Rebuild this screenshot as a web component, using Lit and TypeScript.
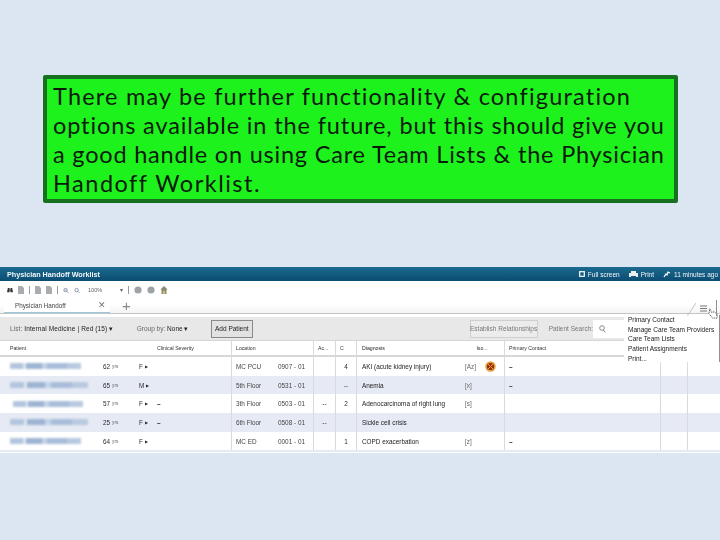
import { LitElement, html, css, svg } from "lit";
import { customElement } from "lit/decorators.js";

type Row = { w: number; off: number; age: string; sex: string; sev: string; loc: string; bed: string; ac: string; c: string; dx: string; iso: string; flag?: boolean; pc: string };

const rows: Row[] = [
  { w: 71, off: 10, age: "62", sex: "F", sev: "", loc: "MC PCU", bed: "0907 - 01", ac: "", c: "4", dx: "AKI (acute kidney injury)", iso: "[Az]", flag: true, pc: "–" },
  { w: 78, off: 10, age: "65", sex: "M", sev: "", loc: "5th Floor", bed: "0531 - 01", ac: "", c: "--", dx: "Anemia", iso: "[x]", pc: "–" },
  { w: 70, off: 13, age: "57", sex: "F", sev: "–", loc: "3th Floor", bed: "0503 - 01", ac: "--", c: "2", dx: "Adenocarcinoma of right lung", iso: "[s]", pc: "" },
  { w: 78, off: 10, age: "25", sex: "F", sev: "–", loc: "6th Floor", bed: "0508 - 01", ac: "--", c: "", dx: "Sickle cell crisis", iso: "", pc: "" },
  { w: 71, off: 10, age: "64", sex: "F", sev: "", loc: "MC ED", bed: "0001 - 01", ac: "", c: "1", dx: "COPD exacerbation", iso: "[z]", pc: "–" },
];

const menu = ["Primary Contact", "Manage Care Team Providers", "Care Team Lists", "Patient Assignments", "Print..."];

const doc = svg`<path d="M0 0h4l2 2v6H0z" fill="#a9adb0"/>`;

@customElement("app-root")
export class AppRoot extends LitElement {
  static styles = css`
    :host { display: block; width: 720px; height: 540px; background: #dce6f2; overflow: hidden; font-family: "Liberation Sans", Arial, sans-serif; }
    .page { display: flex; flex-direction: column; padding-top: 75px; }
    .callout {
      box-sizing: border-box; width: 635px; height: 128px; margin-left: 43px;
      border: 4px solid #17701f; border-radius: 2px; background: #1df21d; color: #0a1a0a;
      padding: 3px 0 0 6px; font: 400 23.5px/29px "Lato", "Liberation Sans", sans-serif; white-space: nowrap;
    }
    .callout div { height: 29px; }
    .l1 { letter-spacing: 1.2px; }
    .l2 { letter-spacing: 0.88px; }
    .l3 { letter-spacing: 0.8px; }
    .l4 { letter-spacing: 1.5px; }
    .app { position: relative; margin-top: 64px; height: 186px; background: #fff; filter: blur(0.35px); color: #222; font-size: 7px; }
    .top { height: 14px; background: linear-gradient(#1b6b90, #0b4c72); color: #f2f6f8; display: flex; align-items: center; padding: 0 2px 0 7px; font-size: 6.5px; }
    .title { font-weight: 700; font-size: 7.2px; flex: 1; }
    .tact { display: flex; align-items: center; gap: 3px; margin-left: 9px; white-space: nowrap; }
    .tools { box-sizing: border-box; height: 17px; display: flex; align-items: center; padding: 1px 0 0 7px; gap: 5px; color: #555; }
    .sep { width: 1px; height: 8px; background: #9a9a9a; }
    .zoomv { box-sizing: border-box; width: 38px; padding-left: 3px; color: #666; font-size: 5.6px; display: flex; justify-content: space-between; }
    .tabs { box-sizing: border-box; height: 16px; display: flex; align-items: center; border-bottom: 1px solid #c4c4c4; background: linear-gradient(#fff 40%, #f4f4f4); }
    .tab { box-sizing: border-box; width: 106px; height: 15px; margin-left: 4px; padding: 0 4px 0 11px; display: flex; align-items: center; justify-content: space-between; border-bottom: 1px solid #9cc6da; background: #fff; color: #444; font-size: 6.3px; }
    .tabx { color: #777; font-size: 9px; }
    .plus { margin-left: 12px; color: #888; font-size: 15px; line-height: 15px; }
    .filter { margin-top: 3px; height: 23px; background: #e8e8e8; display: flex; align-items: center; padding-left: 10px; color: #666; font-size: 6.5px; white-space: nowrap; }
    .filter b { font-weight: 400; color: #222; }
    .list { width: 128px; letter-spacing: 0.1px; }
    .group { width: 75px; }
    .btn { box-sizing: border-box; height: 18px; display: flex; align-items: center; justify-content: center; white-space: nowrap; }
    .add { width: 42px; border: 1px solid #8a8a8a; background: #e2e2e2; color: #222; }
    .est { width: 68px; margin-left: 217px; border: 1px solid #cfcfcf; background: #ececec; color: #777; }
    .search { margin-left: 11px; width: 45px; color: #777; }
    .input { width: 122px; height: 18px; background: #fff; display: flex; align-items: center; padding-left: 6px; }
    .grid { display: grid; grid-template-columns: 100px 35px 18px 78px 82px 22px 21px 104px 44px 156px 27px 29px; align-items: center; }
    .head { box-sizing: border-box; height: 17px; background: #fff; border-top: 1px solid #d6d6d6; border-bottom: 2px solid #d8d8d8; font-size: 5.2px; color: #333; }
    .row { height: 18.7px; font-size: 6.4px; color: #2a2a2a; background: #fff; }
    .row.alt { background: #e6eaf4; }
    .cell { height: 100%; display: flex; align-items: center; box-sizing: border-box; min-width: 0; white-space: nowrap; }
    .line { border-left: 1px solid #dadada; }
    .pad { padding-left: 3px; }
    .age small { font-size: 4.6px; color: #666; margin-left: 2px; }
    .sx { padding-left: 4px; }
    .dx { padding-left: 5px; color: #222; }
    .ctr { justify-content: center; }
    .name { height: 6px; border-radius: 1px; background: linear-gradient(90deg, #b3c5de 0 18%, #dfe6f0 18% 22%, #9db4d3 22% 45%, #c4d2e6 45% 52%, #a8bdd9 52% 80%, #b8c9e0 80%); filter: blur(1px); }
    .sev { padding-left: 4px; }
    .pc { font-weight: 700; color: #222; }
    .tri { margin-left: 2px; font-size: 4px; }
    .loc { display: flex; width: 100%; padding-left: 4px; gap: 9px; color: #444; }
    .locn { width: 33px; overflow: hidden; }
    .iso { gap: 9px; padding-left: 5px; color: #666; }
    .end { height: 2px; background: #e6eaf4; }
    .menu { position: absolute; left: 624px; top: 48px; width: 91px; height: 47px; background: #fff; border-right: 1px solid #8f8f8f; padding-left: 4px; box-sizing: content-box; color: #222; font-size: 6.5px; line-height: 9.7px; white-space: nowrap; }
    .burger { position: absolute; left: 687px; top: 33px; }
    .cursor { position: absolute; left: 708px; top: 41px; }
    .rsep { position: absolute; right: 3px; top: 33px; width: 1px; height: 16px; background: #8f8f8f; }
  `;

  render() {
    return html`<div class="page">
      <div class="callout"><div class="l1">There may be further functionality &amp; configuration</div><div class="l2">options available in the future, but this should give you</div><div class="l3">a good handle on using Care Team Lists &amp; the Physician</div><div class="l4">Handoff Worklist.</div></div>
      <div class="app">
        <div class="top">
          <span class="title">Physician Handoff Worklist</span>
          <span class="tact"><svg width="6" height="6" viewBox="0 0 6 6"><rect x=".7" y=".7" width="4.6" height="4.6" fill="none" stroke="#fff" stroke-width="1.2"/></svg>Full screen</span>
          <span class="tact"><svg width="9" height="7" viewBox="0 0 9 7"><path d="M2 0h5v2h2v4H7V5H2v1H0V2h2z" fill="#e8eef2"/></svg>Print</span>
          <span class="tact"><svg width="8" height="7" viewBox="0 0 8 7"><path d="M1 6l2-3 1 1 1-3 2 1" fill="none" stroke="#fff" stroke-width="1.2"/></svg>11 minutes ago</span>
        </div>
        <div class="tools">
          <svg width="6" height="7" viewBox="0 0 7 8"><path d="M1 1h2v2h1V1h2l1 5H4V4H3v2H0z" fill="#333"/></svg>
          <svg width="6" height="8" viewBox="0 0 6 8">${doc}</svg><span class="sep"></span>
          <svg width="6" height="8" viewBox="0 0 6 8">${doc}</svg>
          <svg width="6" height="8" viewBox="0 0 6 8">${doc}</svg><span class="sep"></span>
          <svg width="6" height="7" viewBox="0 0 8 8"><circle cx="3.4" cy="3.4" r="2.3" fill="none" stroke="#6d7f95"/><path d="M5 5l2.4 2.4M2.2 3.4h2.4" stroke="#6d7f95"/></svg>
          <svg width="6" height="7" viewBox="0 0 8 8"><circle cx="3.4" cy="3.4" r="2.3" fill="none" stroke="#6d7f95"/><path d="M5 5l2.4 2.4" stroke="#6d7f95"/></svg>
          <span class="zoomv"><span>100%</span><span>▾</span></span><span class="sep"></span>
          <svg width="8" height="8" viewBox="0 0 8 8"><circle cx="4" cy="4" r="3.6" fill="#9ea3a6"/></svg>
          <svg width="8" height="8" viewBox="0 0 8 8"><circle cx="4" cy="4" r="3.6" fill="#9ea3a6"/></svg>
          <svg width="8" height="8" viewBox="0 0 8 8"><path d="M4 0l3.600 3.600H6.500V8h-5V3.600H.4z" fill="#8b8b6f"/><path d="M3.200 5h1.600v3H3.200z" fill="#e8d27a"/></svg>
        </div>
        <div class="tabs">
          <div class="tab"><span>Physician Handoff</span><span class="tabx">✕</span></div>
          <span class="plus">+</span>
        </div>
        <div class="filter">
          <span class="list">List: <b>Internal Medicine | Red (15) ▾</b></span>
          <span class="group">Group by: <b>None ▾</b></span>
          <span class="btn add">Add Patient</span>
          <span class="btn est">Establish Relationships</span>
          <span class="search">Patient Search:</span>
          <span class="input"><svg width="7" height="8" viewBox="0 0 7 8"><circle cx="3" cy="3" r="2.300" fill="none" stroke="#888"/><path d="M4.500 5l1.800 2.400" stroke="#888"/></svg></span>
        </div>
        <div class="grid head">
          <span class="cell" style="grid-column: span 3; padding-left: 10px">Patient</span>
          <span class="cell sev">Clinical Severity</span>
          <span class="cell line sev">Location</span>
          <span class="cell line sev">Ac...</span>
          <span class="cell line sev">C</span>
          <span class="cell line dx">Diagnosis</span>
          <span class="cell ctr">Iso...</span>
          <span class="cell line sev">Primary Contact</span>
          <span class="cell"></span><span class="cell"></span>
        </div>
        ${rows.map((r, i) => html`<div class="grid row ${i % 2 ? "alt" : ""}">
          <span class="cell"><span class="name" style="width:${r.w}px;margin-left:${r.off}px"></span></span>
          <span class="cell pad age">${r.age}<small>yrs</small></span>
          <span class="cell sx">${r.sex}<span class="tri">▶</span></span>
          <span class="cell sev pc">${r.sev}</span>
          <span class="cell line"><span class="loc"><span class="locn">${r.loc}</span><span>${r.bed}</span></span></span>
          <span class="cell line ctr">${r.ac}</span>
          <span class="cell line ctr">${r.c}</span>
          <span class="cell line dx">${r.dx}</span>
          <span class="cell iso">${r.iso}${r.flag
            ? html`<svg width="11" height="11" viewBox="0 0 11 11"><circle cx="5.500" cy="5.500" r="5.200" fill="#e9a13a"/><circle cx="5.500" cy="5.500" r="3.600" fill="#8f2f16"/><path d="M3 3l5 5M8 3l-5 5" stroke="#e9a13a"/></svg>`
            : ""}</span>
          <span class="cell line sev pc">${r.pc}</span>
          <span class="cell line"></span>
          <span class="cell line"></span>
        </div>`)}
        <div class="end"></div>
        <div class="menu">${menu.map((m) => html`<div>${m}</div>`)}</div>
        <svg class="burger" width="30" height="16" viewBox="0 0 30 16"><path d="M0 15h1l8-12" fill="none" stroke="#c4c4c4"/><path d="M13 6h7M13 8.500h7M13 11h7" stroke="#777" stroke-width="1"/></svg>
        <svg class="cursor" width="11" height="11" viewBox="0 0 12 12"><path d="M2 1l2 4 3-1 3 3v4H5L1 6z" fill="#fff" stroke="#222" stroke-width=".8" stroke-dasharray="1.2 .8"/></svg>
        <span class="rsep"></span>
      </div>
    </div>`;
  }
}
